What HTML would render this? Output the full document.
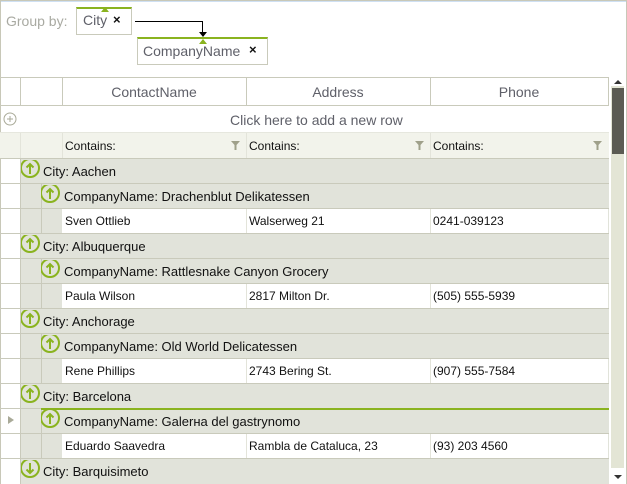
<!DOCTYPE html>
<html><head><meta charset="utf-8"><style>
*{margin:0;padding:0;box-sizing:border-box}
body{width:627px;height:484px;overflow:hidden;background:#fff;font-family:"Liberation Sans",sans-serif;position:relative}
.a{position:absolute}
.t{position:absolute;white-space:nowrap}
.g{background:#e1e3da}
.hl{position:absolute;height:1px;background:#c9cabb}
.vl{position:absolute;width:1px;background:#c9cabb}
.ic{position:absolute;width:20px;height:20px;overflow:hidden}
</style></head><body>
<div class="a" style="left:0;top:0;width:627px;height:1px;background:#c8c8b8"></div>
<div class="a" style="left:0;top:1px;width:626px;height:1px;background:#cfe0f3"></div>
<div class="a" style="left:626px;top:0;width:1px;height:484px;background:#c8c8b8"></div>
<div class="a" style="left:0;top:0;width:1px;height:484px;background:#c8c8b8"></div>

<div class="t" style="left:6px;top:13px;font-size:14px;color:#a9aaa2">Group by:</div>
<div class="a" style="left:76px;top:7px;width:56px;height:28px;border:1px solid #c9cabb;border-top:2px solid #8ab31f"></div>
<div class="a" style="left:101px;top:7px;width:0;height:0;border-left:4px solid transparent;border-right:4px solid transparent;border-bottom:5px solid #8ab31f"></div>
<div class="t" style="left:83px;top:12px;font-size:14px;color:#5f6069">City</div>
<div class="t" style="left:113px;top:12px;font-size:13px;font-weight:bold;color:#111">×</div>
<div class="a" style="left:135px;top:21px;width:68px;height:1px;background:#000"></div>
<div class="a" style="left:202px;top:21px;width:1px;height:12px;background:#000"></div>
<div class="a" style="left:199px;top:32px;border-left:4px solid transparent;border-right:4px solid transparent;border-top:5px solid #000"></div>
<div class="a" style="left:137px;top:37px;width:131px;height:28px;border:1px solid #c9cabb;border-top:2px solid #8ab31f"></div>
<div class="a" style="left:199px;top:39px;border-left:4px solid transparent;border-right:4px solid transparent;border-bottom:5px solid #8ab31f"></div>
<div class="t" style="left:143px;top:43px;font-size:14px;color:#5f6069">CompanyName</div>
<div class="t" style="left:249px;top:42px;font-size:13px;font-weight:bold;color:#111">×</div>

<div class="hl" style="left:0;top:77px;width:609px"></div>
<div class="hl" style="left:0;top:105px;width:609px"></div>
<div class="vl" style="left:20px;top:77px;height:29px"></div>
<div class="vl" style="left:62px;top:77px;height:29px"></div>
<div class="vl" style="left:246px;top:77px;height:29px"></div>
<div class="vl" style="left:430px;top:77px;height:29px"></div>
<div class="vl" style="left:608px;top:77px;height:29px"></div>
<div class="t" style="left:62px;width:184px;text-align:center;top:84px;font-size:14px;color:#5f6069">ContactName</div>
<div class="t" style="left:246px;width:184px;text-align:center;top:84px;font-size:14px;color:#5f6069">Address</div>
<div class="t" style="left:430px;width:178px;text-align:center;top:84px;font-size:14px;color:#5f6069">Phone</div>

<svg class="a" style="left:3px;top:112px" width="14" height="14"><circle cx="7" cy="7" r="6" fill="none" stroke="#a9aa98"/><path d="M7 4v6M4 7h6" stroke="#a9aa98"/></svg>
<div class="t" style="left:230px;top:112px;font-size:14px;color:#5f6069">Click here to add a new row</div>

<div class="a" style="left:0;top:133px;width:609px;height:26px;background:#f2f3eb"></div>
<div class="hl" style="left:0;top:132px;width:609px;background:#e6e7de"></div>
<div class="vl" style="left:20px;top:133px;height:26px;background:#e3e4da"></div>
<div class="vl" style="left:62px;top:133px;height:26px;background:#e3e4da"></div>
<div class="vl" style="left:246px;top:133px;height:26px;background:#e3e4da"></div>
<div class="vl" style="left:430px;top:133px;height:26px;background:#e3e4da"></div>
<div class="t" style="left:65px;top:139px;font-size:12px;color:#111">Contains:</div>
<div class="t" style="left:249px;top:139px;font-size:12px;color:#111">Contains:</div>
<div class="t" style="left:433px;top:139px;font-size:12px;color:#111">Contains:</div>
<svg class="a" style="left:231px;top:141px" width="9" height="9"><path d="M0 0h9L5.5 4v5h-2V4z" fill="#9fa08a"/></svg>
<svg class="a" style="left:415px;top:141px" width="9" height="9"><path d="M0 0h9L5.5 4v5h-2V4z" fill="#9fa08a"/></svg>
<svg class="a" style="left:593px;top:141px" width="9" height="9"><path d="M0 0h9L5.5 4v5h-2V4z" fill="#9fa08a"/></svg>
<div class="hl" style="left:0;top:158px;width:609px"></div>

<div id="rows"></div>

<div class="a" style="left:611px;top:86px;width:13px;height:382px;background:#e3e5d5"></div>
<div class="a" style="left:612px;top:88px;width:12px;height:66px;background:#5b5b53"></div>
<div class="a" style="left:614px;top:80px;border-left:4px solid transparent;border-right:4px solid transparent;border-bottom:4px solid #333"></div>
<div class="a" style="left:614px;top:475px;border-left:4px solid transparent;border-right:4px solid transparent;border-top:4px solid #333"></div>

<script>
var data=[["Aachen","Drachenblut Delikatessen","Sven Ottlieb","Walserweg 21","0241-039123"],
["Albuquerque","Rattlesnake Canyon Grocery","Paula Wilson","2817 Milton Dr.","(505) 555-5939"],
["Anchorage","Old World Delicatessen","Rene Phillips","2743 Bering St.","(907) 555-7584"],
["Barcelona","Galerна del gastrynomo","Eduardo Saavedra","Rambla de Cataluca, 23","(93) 203 4560"]];
function icon(x,y,up){return '<svg class="ic" style="left:'+x+'px;top:'+y+'px" viewBox="0 0 20 20"><circle cx="9" cy="8" r="9" fill="none" stroke="#8ab31f" stroke-width="2"/>'+(up?'<path d="M9 14V4M5.5 7.5L9 4l3.5 3.5" fill="none" stroke="#8ab31f" stroke-width="2"/>':'<path d="M9 3v10M5.5 9.5L9 13l3.5-3.5" fill="none" stroke="#8ab31f" stroke-width="2"/>')+'</svg>';}
var h='',y=159;
data.forEach(function(d,i){
 h+='<div class="a g" style="left:20px;top:'+y+'px;width:589px;height:75px"></div>';
 h+='<div class="vl" style="left:20px;top:'+y+'px;height:75px"></div>';
 h+=icon(21,y+1,1)+'<div class="t" style="left:43px;top:'+(y+5)+'px;font-size:13px;color:#111">City: '+d[0]+'</div>';
 h+='<div class="hl" style="left:0;top:'+(y+24)+'px;width:609px"></div>';
 h+='<div class="vl" style="left:41px;top:'+(y+25)+'px;height:50px"></div>';
 if(i==3)h+='<div class="a" style="left:41px;top:'+(y+24)+'px;width:568px;height:2px;background:#8ab31f"></div><div class="a" style="left:8px;top:'+(y+32)+'px;border-top:4px solid transparent;border-bottom:4px solid transparent;border-left:6px solid #a9aa98"></div>';
 h+=icon(41,y+26,1)+'<div class="t" style="left:64px;top:'+(y+30)+'px;font-size:13px;color:#111">CompanyName: '+d[1]+'</div>';
 h+='<div class="hl" style="left:0;top:'+(y+49)+'px;width:609px"></div>';
 h+='<div class="a" style="left:62px;top:'+(y+50)+'px;width:546px;height:24px;background:#fff"></div>';
 h+='<div class="vl" style="left:246px;top:'+(y+50)+'px;height:24px;background:#e3e4da"></div><div class="vl" style="left:430px;top:'+(y+50)+'px;height:24px;background:#e3e4da"></div>';
 h+='<div class="t" style="left:65px;top:'+(y+55)+'px;font-size:12px;color:#111">'+d[2]+'</div><div class="t" style="left:249px;top:'+(y+55)+'px;font-size:12px;color:#111">'+d[3]+'</div><div class="t" style="left:433px;top:'+(y+55)+'px;font-size:12px;color:#111">'+d[4]+'</div>';
 h+='<div class="hl" style="left:0;top:'+(y+74)+'px;width:609px"></div>';
 y+=75;});
h+='<div class="a g" style="left:20px;top:'+y+'px;width:589px;height:25px"></div><div class="vl" style="left:20px;top:'+y+'px;height:25px"></div>'+icon(21,y+1,0)+'<div class="t" style="left:43px;top:'+(y+5)+'px;font-size:13px;color:#111">City: Barquisimeto</div>';
document.getElementById('rows').innerHTML=h;
</script>
</body></html>
